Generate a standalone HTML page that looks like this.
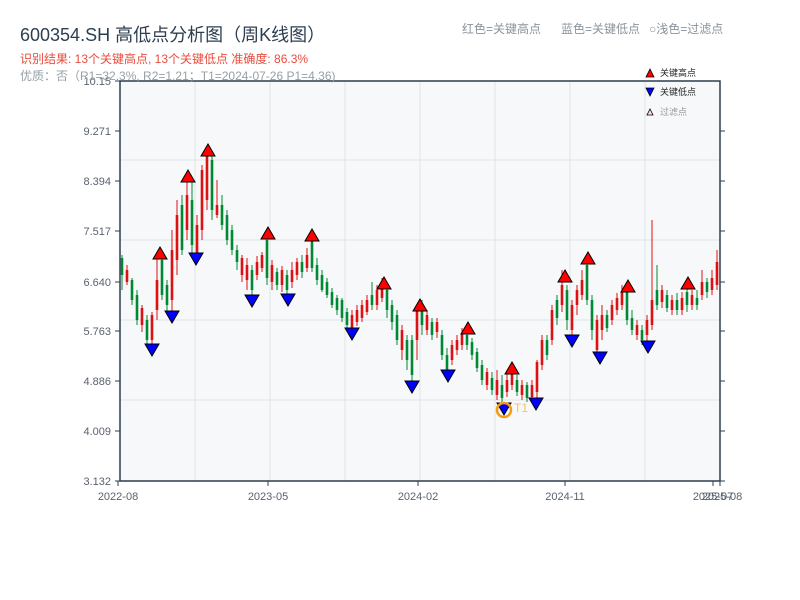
<!DOCTYPE html>
<html><head><meta charset="utf-8">
<style>
body{margin:0;background:#fff;width:800px;height:600px;overflow:hidden;font-family:"Liberation Sans","Noto Sans CJK SC",sans-serif;}
svg{position:absolute;left:0;top:0}
</style></head><body>
<svg width="800" height="600" xmlns="http://www.w3.org/2000/svg" font-family="Liberation Sans, Noto Sans CJK SC, sans-serif">
<rect x="120" y="81" width="600" height="400" fill="#f6f8fa"/>
<g stroke="#e0e3e8" stroke-width="1">
<line x1="195" y1="81" x2="195" y2="481"/><line x1="270" y1="81" x2="270" y2="481"/><line x1="345" y1="81" x2="345" y2="481"/><line x1="420" y1="81" x2="420" y2="481"/><line x1="495" y1="81" x2="495" y2="481"/><line x1="570" y1="81" x2="570" y2="481"/><line x1="645" y1="81" x2="645" y2="481"/>
<line x1="120" y1="160" x2="720" y2="160"/><line x1="120" y1="240" x2="720" y2="240"/><line x1="120" y1="320" x2="720" y2="320"/><line x1="120" y1="400" x2="720" y2="400"/>
</g>
<!-- green candles -->
<path fill="none" stroke="#008833" stroke-width="1" d="M122 255V290M132 278V305M137 290V325M147 315V345M162 255V300M167 280V312M182 195V255M192 180V255M212 152V220M222 195V230M227 210V245M232 225V255M237 245V270M252 265V296M267 235V285M277 268V290M287 270V296M302 255V278M312 237V272M317 258V285M322 270V292M327 278V298M332 288V308M337 295V315M342 298V322M347 308V330M372 282V310M387 285V318M392 300V330M397 310V345M407 335V370M412 335V383M422 300V335M432 318V340M442 330V360M447 348V373M467 328V350M472 338V360M477 348V372M482 360V385M492 372V395M502 375V403M517 375V396M527 382V402M547 335V360M557 295V325M567 285V330M587 260V305M592 295V340M607 310V332M627 288V325M632 310V335M642 325V345M657 265V310M667 290V312M677 293V315M687 285V312M697 290V310M707 278V298"/>
<path fill="none" stroke="#008833" stroke-width="2.6" d="M122 258V275M132 280V300M137 295V320M147 320V340M162 260V295M167 285V305M182 205V250M192 200V245M212 160V210M222 205V225M227 215V240M232 230V250M237 250V262M252 270V290M267 240V278M277 272V285M287 275V290M302 262V272M312 240V268M317 265V280M322 275V290M327 282V295M332 292V305M337 298V310M342 300V318M347 312V325M372 295V305M387 290V310M392 305V322M397 315V340M407 340V360M412 340V375M422 308V325M432 322V335M442 335V355M447 355V370M467 335V345M472 342V355M477 352V368M482 365V380M492 378V390M502 385V398M517 380V392M527 385V398M547 340V355M557 300V318M567 290V320M587 265V300M592 300V330M607 315V328M627 290V320M632 318V330M642 330V340M657 290V305M667 295V308M677 300V310M687 292V305M697 298V305M707 282V292"/>
<!-- red candles -->
<path fill="none" stroke="#dd1111" stroke-width="1" d="M127 265V285M142 305V332M152 312V348M157 255V320M172 230V315M177 200V275M187 178V240M197 215V258M202 165V240M207 150V210M217 180V218M242 255V282M247 258V290M257 256V280M262 252V272M272 260V290M282 266V292M292 262V288M297 258V280M307 248V272M352 310V335M357 305V326M362 300V322M367 295V315M377 285V310M382 278V302M402 325V360M417 305V360M427 310V335M437 318V338M452 340V365M457 335V355M462 328V350M487 368V390M497 370V400M507 370V397M512 368V390M522 380V400M532 380V400M537 360V400M542 335V370M552 305V345M562 270V312M572 300V335M577 285V315M582 270V300M597 315V355M602 305V340M612 300V325M617 293V315M622 285V310M637 320V340M647 315V345M652 220V330M662 285V308M672 295V315M682 292V315M692 290V310M702 270V300M712 270V295M717 250V290"/>
<path fill="none" stroke="#dd1111" stroke-width="2.6" d="M127 270V282M142 308V325M152 315V340M157 280V310M172 250V300M177 215V260M187 195V230M197 225V255M202 170V230M207 155V200M217 205V215M242 258V275M247 265V280M257 262V275M262 255V268M272 265V282M282 270V285M292 270V282M297 262V275M307 255V268M352 315V330M357 310V322M362 305V318M367 300V312M377 290V305M382 282V298M402 330V350M417 310V340M427 315V330M437 322V332M452 345V360M457 340V350M462 333V345M487 372V385M497 380V395M507 380V392M512 370V385M522 385V395M532 385V397M537 362V392M542 340V365M552 310V340M562 285V305M572 305V330M577 290V305M582 280V295M597 320V350M602 315V330M612 305V320M617 298V310M622 292V305M637 325V335M647 320V335M652 300V325M662 290V302M672 300V310M682 298V310M692 295V305M702 282V295M712 278V290M717 262V285"/>
<g fill="none" stroke="#2c3e50" stroke-width="1.5">
<rect x="120" y="81" width="600" height="400"/>
</g>
<g stroke="#2c3e50" stroke-width="1">
<line x1="115" y1="81" x2="120" y2="81"/><line x1="115" y1="131" x2="120" y2="131"/><line x1="115" y1="181" x2="120" y2="181"/><line x1="115" y1="231" x2="120" y2="231"/><line x1="115" y1="282" x2="120" y2="282"/><line x1="115" y1="331" x2="120" y2="331"/><line x1="115" y1="381" x2="120" y2="381"/><line x1="115" y1="431" x2="120" y2="431"/><line x1="115" y1="481" x2="120" y2="481"/>
<line x1="720" y1="131" x2="725" y2="131"/><line x1="720" y1="181" x2="725" y2="181"/><line x1="720" y1="231" x2="725" y2="231"/><line x1="720" y1="282" x2="725" y2="282"/><line x1="720" y1="331" x2="725" y2="331"/><line x1="720" y1="381" x2="725" y2="381"/><line x1="720" y1="431" x2="725" y2="431"/><line x1="720" y1="481" x2="725" y2="481"/>
<line x1="118" y1="481" x2="118" y2="486"/><line x1="268" y1="481" x2="268" y2="486"/><line x1="418" y1="481" x2="418" y2="486"/><line x1="565" y1="481" x2="565" y2="486"/><line x1="713" y1="481" x2="713" y2="486"/><line x1="720" y1="481" x2="720" y2="486"/>
</g>
<g font-size="11" fill="#5a6270" text-anchor="end">
<text x="111" y="85">10.15</text><text x="111" y="135">9.271</text><text x="111" y="185">8.394</text><text x="111" y="235">7.517</text><text x="111" y="286">6.640</text><text x="111" y="335">5.763</text><text x="111" y="385">4.886</text><text x="111" y="435">4.009</text><text x="111" y="485">3.132</text>
</g>
<g font-size="11" fill="#5a6270" text-anchor="middle">
<text x="118" y="500">2022-08</text><text x="268" y="500">2023-05</text><text x="418" y="500">2024-02</text><text x="565" y="500">2024-11</text><text x="713" y="500">2025-07</text><text x="722" y="500">2025-08</text>
</g>
<text x="20" y="41" font-size="18" fill="#2c3e50">600354.SH 高低点分析图（周K线图）</text>
<text x="20" y="63" font-size="12" fill="#e74c3c">识别结果: 13个关键高点, 13个关键低点   准确度: 86.3%</text>
<text x="20" y="80" font-size="12" fill="#95a0a8">优质：否（R1=32.3%, R2=1.21；T1=2024-07-26 P1=4.36)</text>
<text x="462" y="33" font-size="12" fill="#8a939c">红色=关键高点</text>
<text x="561" y="33" font-size="12" fill="#8a939c">蓝色=关键低点</text>
<text x="649" y="33" font-size="12" fill="#8a939c">○浅色=过滤点</text>
<polygon points="646,77 654,77 650,69" fill="#f00" stroke="#000" stroke-width="0.8"/>
<text x="660" y="76" font-size="9" fill="#222">关键高点</text>
<polygon points="646,88 654,88 650,96" fill="#00f" stroke="#000" stroke-width="0.8"/>
<text x="660" y="95" font-size="9" fill="#222">关键低点</text>
<polygon points="647,115 653,115 650,109" fill="#fdd" stroke="#000" stroke-width="0.8"/>
<text x="660" y="115" font-size="9" fill="#999">过滤点</text>
<g fill="#f00" stroke="#000" stroke-width="1">
<polygon points="153,259 167,259 160,247"/>
<polygon points="181,182 195,182 188,170"/>
<polygon points="201,156 215,156 208,144"/>
<polygon points="261,239 275,239 268,227"/>
<polygon points="305,241 319,241 312,229"/>
<polygon points="377,289 391,289 384,277"/>
<polygon points="413,311 427,311 420,299"/>
<polygon points="461,334 475,334 468,322"/>
<polygon points="505,374 519,374 512,362"/>
<polygon points="558,282 572,282 565,270"/>
<polygon points="581,264 595,264 588,252"/>
<polygon points="621,292 635,292 628,280"/>
<polygon points="681,289 695,289 688,277"/>
</g>
<g fill="#00f" stroke="#000" stroke-width="1">
<polygon points="145,344 159,344 152,356"/>
<polygon points="165,311 179,311 172,323"/>
<polygon points="189,253 203,253 196,265"/>
<polygon points="245,295 259,295 252,307"/>
<polygon points="281,294 295,294 288,306"/>
<polygon points="345,328 359,328 352,340"/>
<polygon points="405,381 419,381 412,393"/>
<polygon points="441,370 455,370 448,382"/>
<polygon points="497,403 511,403 504,415"/>
<polygon points="529,398 543,398 536,410"/>
<polygon points="565,335 579,335 572,347"/>
<polygon points="593,352 607,352 600,364"/>
<polygon points="641,341 655,341 648,353"/>
</g>
<circle cx="504" cy="410" r="7" fill="none" stroke="#f39c12" stroke-width="2.5"/>
<text x="514" y="412" font-size="12" fill="#f5c070">T1</text>
</svg>
</body></html>
